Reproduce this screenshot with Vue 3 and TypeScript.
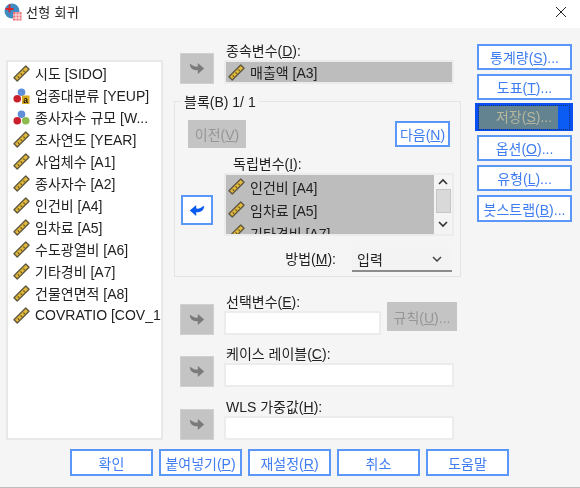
<template>
  <div class="dialog">
    <svg class="defs" width="0" height="0">
      <defs>
        <symbol id="ruler" viewBox="0 0 18 18">
          <path d="M1 13.500 13.500 1 17 4.500 4.500 17z" fill="#e3b93a" stroke="#5c5640" stroke-width="1.400" stroke-linejoin="round" />
          <path d="M5 12l1.500 1.500M8 9l1.500 1.500M11 6l1.500 1.500" stroke="#6b5a20" stroke-width="1.300" />
        </symbol>
        <symbol id="arrow" viewBox="0 0 20 16">
          <path d="M1 2c1.500 1 3 1.500 5 3 1.500.8 3 .8 5 .6V1l8 7-8 7v-4.800c-4 .4-7-.6-8.500-3C1.500 5.500 1.200 3.500 1 2z" fill="currentColor" />
        </symbol>
      </defs>
    </svg>

    <header class="titlebar">
      <svg class="app-icon" width="18" height="18" viewBox="0 0 18 18">
        <circle cx="8" cy="8" r="7.500" fill="#3f8cc4" />
        <path d="M1.500 6h8M5.500 1.500v8" stroke="#d9232e" stroke-width="1.800" />
        <rect x="9" y="9" width="8.500" height="8.500" fill="#e8737a" />
        <path d="M9 12h8.500M9 15h8.500M12 9v8.500M15 9v8.500" stroke="#fff" stroke-width=".8" />
      </svg>
      <span class="title">선형 회귀</span>
      <svg class="close" width="12" height="12" viewBox="0 0 12 12">
        <path d="M1 1l10 10M11 1 1 11" stroke="#222" stroke-width="1" />
      </svg>
    </header>

    <div class="content">
      <div class="main">
        <ul class="var-list">
          <li v-for="item in variables" :key="item.label" class="var-row">
            <svg v-if="item.kind === 'scale'" class="var-icon"><use href="#ruler" /></svg>
            <svg v-else class="var-icon" viewBox="0 0 18 18">
              <circle cx="9" cy="5.500" r="4" fill="#5f8fd8" />
              <circle cx="4.500" cy="12.500" r="4" fill="#c9202c" />
              <circle v-if="item.kind === 'ordinal'" cx="13.500" cy="12.500" r="4" fill="#8dbb4f" />
              <template v-else>
                <rect x="9.500" y="9" width="8" height="9" fill="#d8a81e" />
                <text x="10.800" y="16.500" class="badge-letter">a</text>
              </template>
            </svg>
            <span class="var-label">{{ item.label }}</span>
          </li>
        </ul>

        <div class="middle">
          <div class="target-row dep-row">
            <button class="arrow-btn"><svg class="arrow"><use href="#arrow" /></svg></button>
            <div class="field-col">
              <label class="field-label">종속변수(<u>D</u>):</label>
              <div class="field filled">
                <div class="var-row selected">
                  <svg class="var-icon"><use href="#ruler" /></svg>
                  <span>매출액 [A3]</span>
                </div>
              </div>
            </div>
          </div>

          <fieldset class="block">
            <legend>블록(B) 1/ 1</legend>
            <div class="block-nav">
              <button class="btn-flat prev">이전(<u>V</u>)</button>
              <button class="btn next">다음(<u>N</u>)</button>
            </div>
            <div class="indep">
              <button class="arrow-btn active"><svg class="arrow flipped"><use href="#arrow" /></svg></button>
              <div class="field-col">
                <label class="field-label indent">독립변수(<u>I</u>):</label>
                <div class="field list-field">
                  <div class="list-rows">
                    <div v-for="item in independents" :key="item" class="var-row selected">
                      <svg class="var-icon"><use href="#ruler" /></svg>
                      <span>{{ item }}</span>
                    </div>
                  </div>
                  <div class="scrollbar">
                    <svg width="12" height="14" viewBox="0 0 12 14"><path d="M2 9l4-4 4 4" fill="none" stroke="#333" stroke-width="1.600" /></svg>
                    <div class="thumb"></div>
                    <svg class="scroll-down" width="12" height="14" viewBox="0 0 12 14"><path d="M2 5l4 4 4-4" fill="none" stroke="#333" stroke-width="1.600" /></svg>
                  </div>
                </div>
              </div>
            </div>
            <div class="method">
              <label class="field-label">방법(<u>M</u>):</label>
              <div class="select">
                <span>입력</span>
                <svg width="10" height="6" viewBox="0 0 10 6"><path d="M1 1l4 4 4-4" fill="none" stroke="#444" stroke-width="1.500" /></svg>
              </div>
            </div>
          </fieldset>

          <div class="target-row select-row">
            <button class="arrow-btn"><svg class="arrow"><use href="#arrow" /></svg></button>
            <div class="field-col narrow">
              <label class="field-label">선택변수(<u>E</u>):</label>
              <div class="field"></div>
            </div>
            <button class="btn-flat rule">규칙(<u>U</u>)...</button>
          </div>
          <div class="target-row case-row">
            <button class="arrow-btn"><svg class="arrow"><use href="#arrow" /></svg></button>
            <div class="field-col">
              <label class="field-label">케이스 레이블(<u>C</u>):</label>
              <div class="field"></div>
            </div>
          </div>
          <div class="target-row wls-row">
            <button class="arrow-btn"><svg class="arrow"><use href="#arrow" /></svg></button>
            <div class="field-col">
              <label class="field-label">WLS 가중값(<u>H</u>):</label>
              <div class="field"></div>
            </div>
          </div>
        </div>

        <div class="side">
          <button class="btn side-btn">통계량(<u>S</u>)...</button>
          <button class="btn side-btn">도표(<u>T</u>)...</button>
          <button class="btn side-btn focused"><span>저장(<u>S</u>)...</span></button>
          <button class="btn side-btn">옵션(<u>O</u>)...</button>
          <button class="btn side-btn">유형(<u>L</u>)...</button>
          <button class="btn side-btn">붓스트랩(<u>B</u>)...</button>
        </div>
      </div>

      <footer class="actions">
        <button class="btn action">확인</button>
        <button class="btn action">붙여넣기(<u>P</u>)</button>
        <button class="btn action">재설정(<u>R</u>)</button>
        <button class="btn action">취소</button>
        <button class="btn action">도움말</button>
      </footer>
    </div>
  </div>
</template>

<script setup lang="ts">
type Kind = 'scale' | 'nominal' | 'ordinal'

const variables: { label: string; kind: Kind }[] = [
  { label: '시도 [SIDO]', kind: 'scale' },
  { label: '업종대분류 [YEUP]', kind: 'nominal' },
  { label: '종사자수 규모 [W...', kind: 'ordinal' },
  { label: '조사연도 [YEAR]', kind: 'scale' },
  { label: '사업체수 [A1]', kind: 'scale' },
  { label: '종사자수 [A2]', kind: 'scale' },
  { label: '인건비 [A4]', kind: 'scale' },
  { label: '임차료 [A5]', kind: 'scale' },
  { label: '수도광열비 [A6]', kind: 'scale' },
  { label: '기타경비 [A7]', kind: 'scale' },
  { label: '건물연면적 [A8]', kind: 'scale' },
  { label: 'COVRATIO [COV_1', kind: 'scale' },
]

const independents = ['인건비 [A4]', '임차료 [A5]', '기타경비 [A7]']
</script>

<style>
html,
body {
  margin: 0;
  background: #f5f5f5;
}
</style>

<style scoped>
.dialog {
  width: 580px;
  height: 488px;
  overflow: hidden;
  display: flex;
  flex-direction: column;
  font-family: "Liberation Sans", "Noto Sans CJK KR", sans-serif;
  font-size: 14px;
  color: #222;
  background: #f5f5f5;
  filter: blur(0.3px);
}

.defs {
  position: absolute;
}

.titlebar {
  box-sizing: border-box;
  height: 28px;
  flex: none;
  background: #fff;
  display: flex;
  align-items: center;
  padding: 0 13px 5px 4px;
}

.title {
  margin-left: 4px;
  font-size: 13px;
  letter-spacing: 0.3px;
  flex: 1;
}

.content {
  flex: 1;
  display: flex;
  flex-direction: column;
  border-bottom: 1px solid #bdbdbd;
}

.main {
  display: flex;
  height: 421px;
}

.var-list {
  list-style: none;
  box-sizing: border-box;
  width: 157px;
  height: 380px;
  margin: 32px 0 0 6px;
  padding: 0 0 0 5px;
  background: #fff;
  border: 2px solid #e8e8e8;
  flex: none;
}

.var-row {
  display: flex;
  align-items: center;
  height: 22px;
  white-space: nowrap;
}

.var-icon {
  width: 17px;
  height: 17px;
  flex: none;
  margin-right: 5px;
}

.badge-letter {
  font-size: 9px;
  font-weight: bold;
  fill: #111;
}

.middle {
  width: 287px;
  margin-left: 11px;
  flex: none;
}

.target-row {
  display: flex;
  align-items: flex-end;
  margin-left: 6px;
}

.dep-row {
  margin-top: 15px;
}

.select-row {
  margin-top: 17px;
}

.case-row {
  margin-top: 11px;
}

.wls-row {
  margin-top: 12px;
}

.arrow-btn {
  width: 34px;
  height: 31px;
  flex: none;
  margin-right: 10px;
  padding: 0;
  border: 1px solid #d0d0d0;
  background: #c4c4c4;
  color: #7b7b7b;
  display: flex;
  align-items: center;
  justify-content: center;
}

.arrow {
  width: 16px;
  height: 13px;
}

.flipped {
  transform: scaleX(-1);
}

.field-col {
  display: flex;
  flex-direction: column;
  width: 230px;
}

.narrow {
  width: 157px;
}

.field-label {
  line-height: 17px;
  padding-left: 2px;
}

.indent {
  margin-left: 7px;
}

.field {
  box-sizing: border-box;
  height: 24px;
  background: #fff;
  border: 2px solid #ececec;
}

.filled {
  background: #bdbdbd;
  padding-left: 2px;
}

.filled .var-row {
  height: 20px;
}

.block {
  box-sizing: border-box;
  height: 184px;
  margin: 9px 0 0;
  padding: 0;
  border: 1px solid #e4e4e4;
  min-width: 0;
}

legend {
  padding: 0 3px;
  margin-left: 6px;
  line-height: 16px;
  position: relative;
  top: 1px;
}

.block-nav {
  display: flex;
  justify-content: space-between;
  align-items: center;
  margin: 11px 10px 0 13px;
}

.btn-flat {
  background: #c4c4c4;
  border: 0;
  color: #969696;
  font: inherit;
  padding: 0;
}

.prev {
  width: 58px;
  height: 28px;
}

.btn {
  box-sizing: border-box;
  background: #fff;
  border: 2px solid #5b97f7;
  color: #3f7df0;
  font: inherit;
  padding: 0;
  white-space: nowrap;
}

.next {
  width: 55px;
  height: 26px;
}

.indep {
  display: flex;
  align-items: flex-end;
  margin: 8px 0 0 6px;
}

.active {
  width: 32px;
  height: 30px;
  margin: 0 11px 11px 0;
  background: #fff;
  border: 2px solid #5b97f7;
  color: #0a5cf0;
}

.list-field {
  height: 63px;
  background: #bdbdbd;
  display: flex;
  overflow: hidden;
}

.list-rows {
  flex: 1;
  min-width: 0;
  padding-left: 2px;
}

.list-rows .var-row {
  height: 23px;
}

.scrollbar {
  flex: none;
  width: 18px;
  background: #f4f4f4;
  display: flex;
  flex-direction: column;
  align-items: center;
}

.thumb {
  width: 15px;
  height: 24px;
  background: #d9d9d9;
  border: 1px solid #c6c6c6;
  box-sizing: border-box;
}

.scroll-down {
  margin-top: auto;
  margin-bottom: 3px;
}

.method {
  display: flex;
  align-items: center;
  justify-content: flex-end;
  margin: 11px 8px 0 0;
  gap: 16px;
}

.select {
  box-sizing: border-box;
  width: 100px;
  height: 25px;
  background: #f3f3f3;
  border-bottom: 2px solid #8c8c8c;
  display: flex;
  align-items: center;
  justify-content: space-between;
  padding: 0 10px 0 5px;
}

.rule {
  width: 70px;
  height: 29px;
  margin: 0 0 4px 6px;
  flex: none;
}

.side {
  display: flex;
  flex-direction: column;
  align-items: flex-start;
  margin: 16px 0 0 16px;
}

.side-btn {
  width: 95px;
  height: 26px;
  margin-bottom: 4px;
}

.side-btn:nth-child(2) {
  margin-bottom: 3px;
}

.side-btn:last-child {
  height: 27px;
}

.focused {
  width: 98px;
  height: 28px;
  margin: 0 0 4px -2px;
  background: #0a4ff0;
  border: 0;
  padding: 3px 4px 2px;
  display: flex;
}

.focused span {
  flex: 1;
  background: linear-gradient(to right, #648391 88%, #0a5cf5 88%);
  color: #b6b69c;
  line-height: 23px;
  outline: 1px dotted #123a7a;
}

.actions {
  display: flex;
  gap: 6px;
  margin-left: 70px;
}

.action {
  width: 83px;
  height: 27px;
}
</style>
